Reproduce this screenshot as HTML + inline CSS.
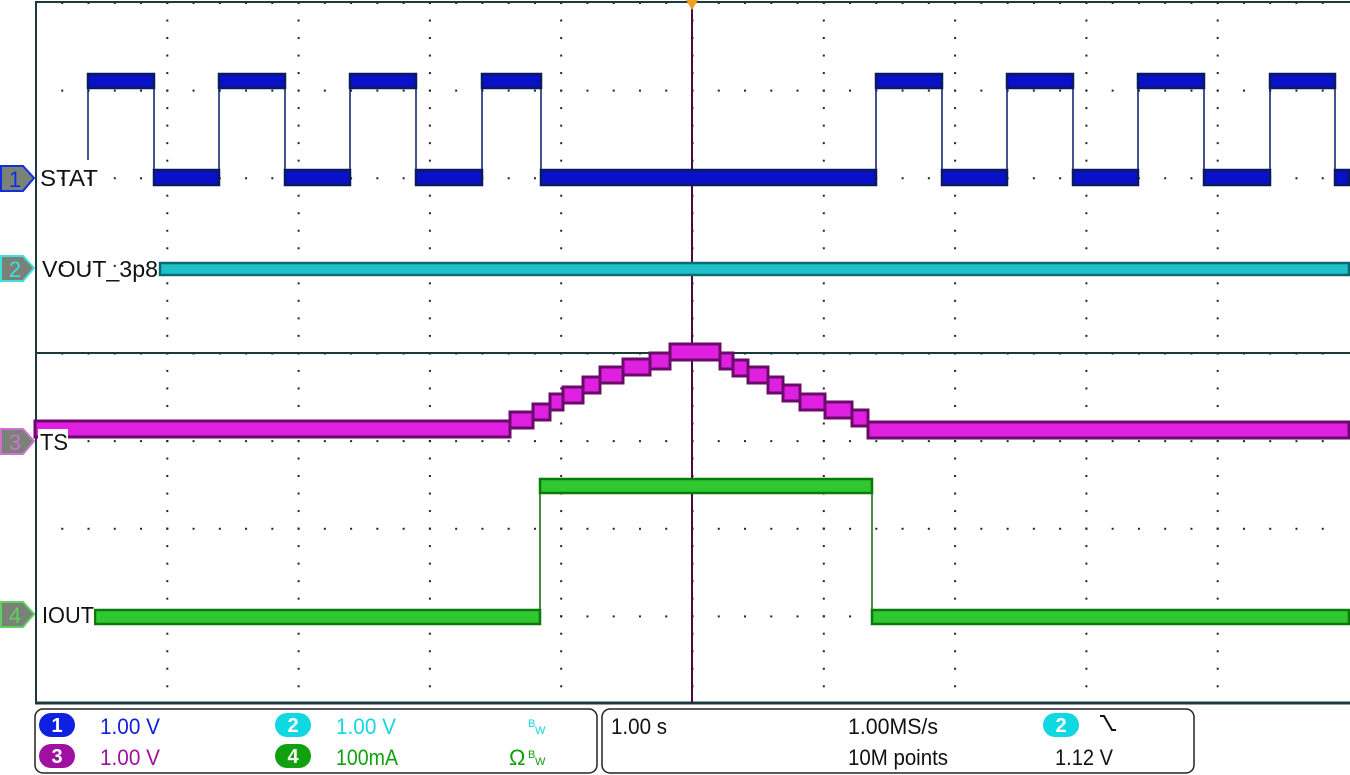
<!DOCTYPE html>
<html><head><meta charset="utf-8"><style>
body{margin:0;background:#fff;width:1350px;height:775px;overflow:hidden}
svg{display:block}
text{font-family:"Liberation Sans",sans-serif}
</style></head><body>
<svg width="1350" height="775" viewBox="0 0 1350 775">
<defs>
<pattern id="pv" x="35" y="2" width="131.3" height="17.52" patternUnits="userSpaceOnUse"><rect x="-1" y="-1" width="3" height="3" fill="#222"/></pattern>
<pattern id="ph" x="35" y="2" width="26.26" height="87.63" patternUnits="userSpaceOnUse"><rect x="-1" y="-1" width="3" height="3" fill="#222"/></pattern>
</defs>
<rect x="35" y="2" width="1313" height="701" fill="url(#pv)"/>
<rect x="35" y="2" width="1313" height="701" fill="url(#ph)"/>
<line x1="35" y1="2" x2="1350" y2="2" stroke="#1b3b3b" stroke-width="2"/>
<line x1="36" y1="2" x2="36" y2="704" stroke="#1b3b3b" stroke-width="2"/>
<line x1="35" y1="703" x2="1350" y2="703" stroke="#1b3b3b" stroke-width="3"/>
<line x1="35" y1="353" x2="1350" y2="353" stroke="#1b3b3b" stroke-width="2"/>
<line x1="692" y1="2" x2="692" y2="703" stroke="#4a0a4a" stroke-width="2"/>
<path d="M686 0 L698 0 L692 10 Z" fill="#f0a020"/>
<g stroke="#0a1a6a" stroke-width="1.5" fill="none">
<path d="M88 160V81M154 81V178M219 178V81M285 81V178M350 178V81M416 81V178M482 178V81M541 81V178M876 178V81M942 81V178M1007 178V81M1073 81V178M1138 178V81M1204 81V178M1270 178V81M1335 81V178"/>
</g>
<g fill="#0a10c8" stroke="#081a60" stroke-width="2.5">
<rect x="88" y="74" width="66" height="14"/><rect x="219" y="74" width="66" height="14"/><rect x="350" y="74" width="66" height="14"/><rect x="482" y="74" width="59" height="14"/>
<rect x="876" y="74" width="66" height="14"/><rect x="1007" y="74" width="66" height="14"/><rect x="1138" y="74" width="66" height="14"/><rect x="1270" y="74" width="65" height="14"/>
<rect x="154" y="170" width="65" height="15"/><rect x="285" y="170" width="65" height="15"/><rect x="416" y="170" width="66" height="15"/><rect x="541" y="170" width="335" height="15"/>
<rect x="942" y="170" width="65" height="15"/><rect x="1073" y="170" width="65" height="15"/><rect x="1204" y="170" width="66" height="15"/><rect x="1335" y="170" width="14" height="15"/>
</g>
<rect x="160" y="263" width="1189" height="12" fill="#20c0c8" stroke="#0a6a70" stroke-width="2.5"/>
<g fill="#e020e0" stroke="#6a0a6a" stroke-width="3">
<rect x="35" y="421" width="475" height="16"/>
<rect x="510" y="412" width="23" height="16"/><rect x="533" y="404" width="17" height="16"/><rect x="550" y="394" width="13" height="16"/><rect x="563" y="387" width="20" height="16"/><rect x="583" y="377" width="17" height="16"/><rect x="600" y="367" width="23" height="16"/><rect x="623" y="359" width="27" height="16"/><rect x="650" y="353" width="20" height="16"/><rect x="670" y="344" width="50" height="16"/><rect x="720" y="353" width="13" height="16"/><rect x="733" y="360" width="15" height="16"/><rect x="748" y="367" width="20" height="16"/><rect x="768" y="377" width="15" height="16"/><rect x="783" y="385" width="17" height="16"/><rect x="800" y="394" width="25" height="16"/><rect x="825" y="402" width="27" height="16"/><rect x="852" y="410" width="16" height="16"/>
<rect x="868" y="422" width="481" height="16"/>
</g>
<path d="M540 617V486M872 486V617" stroke="#0a6a0a" stroke-width="1.5"/>
<g fill="#30c830" stroke="#0a7a0a" stroke-width="2.5">
<rect x="95" y="610" width="445" height="14"/><rect x="540" y="479" width="332" height="14"/><rect x="872" y="610" width="477" height="14"/>
</g>
<rect x="38" y="429" width="30" height="24" fill="#fff"/>
<rect x="38" y="602" width="56" height="24" fill="#fff"/>
<g font-size="23" fill="#111">
<text x="40" y="186" textLength="58" lengthAdjust="spacingAndGlyphs">STAT</text>
<text x="42" y="277" textLength="116" lengthAdjust="spacingAndGlyphs">VOUT_3p8</text>
<text x="40" y="450" textLength="28" lengthAdjust="spacingAndGlyphs">TS</text>
<text x="42" y="623" textLength="52" lengthAdjust="spacingAndGlyphs">IOUT</text>
</g>
<g stroke-width="2" fill="#7a8278">
<path d="M1 166H23L34 178L23 191H1Z" stroke="#1030e0"/>
<path d="M1 256H23L34 268L23 281H1Z" stroke="#40e0e0"/>
<path d="M1 429H23L34 441L23 454H1Z" stroke="#d070d0"/>
<path d="M1 602H23L34 614L23 627H1Z" stroke="#60d060"/>
</g>
<g font-size="22" text-anchor="middle">
<text x="15" y="187" fill="#1030e0">1</text>
<text x="15" y="277" fill="#40e0e0">2</text>
<text x="15" y="450" fill="#d070d0">3</text>
<text x="15" y="623" fill="#60d060">4</text>
</g>
<rect x="35" y="709" width="562" height="64" rx="8" fill="none" stroke="#222" stroke-width="1.5"/>
<rect x="602" y="709" width="592" height="64" rx="8" fill="none" stroke="#222" stroke-width="1.5"/>
<rect x="39" y="713" width="36" height="24" rx="12" fill="#1020e0"/>
<rect x="39" y="744" width="36" height="24" rx="12" fill="#a010a0"/>
<rect x="275" y="713" width="36" height="24" rx="12" fill="#10d8e0"/>
<rect x="275" y="744" width="36" height="24" rx="12" fill="#10a010"/>
<rect x="1043" y="713" width="36" height="24" rx="12" fill="#10d8e0"/>
<g font-size="20" fill="#fff" text-anchor="middle" font-weight="bold">
<text x="57" y="732">1</text><text x="57" y="763">3</text><text x="293" y="732">2</text><text x="293" y="763">4</text><text x="1061" y="732">2</text>
</g>
<g font-size="22">
<text x="100" y="734" fill="#1020e0" textLength="60" lengthAdjust="spacingAndGlyphs">1.00 V</text>
<text x="100" y="765" fill="#a010a0" textLength="60" lengthAdjust="spacingAndGlyphs">1.00 V</text>
<text x="336" y="734" fill="#10d8e0" textLength="60" lengthAdjust="spacingAndGlyphs">1.00 V</text>
<text x="336" y="765" fill="#10a010" textLength="62" lengthAdjust="spacingAndGlyphs">100mA</text>
<text x="509" y="765" fill="#10a010">Ω</text>
<text x="611" y="734" fill="#111" textLength="56" lengthAdjust="spacingAndGlyphs">1.00 s</text>
<text x="848" y="734" fill="#111" textLength="90" lengthAdjust="spacingAndGlyphs">1.00MS/s</text>
<text x="848" y="765" fill="#111" textLength="100" lengthAdjust="spacingAndGlyphs">10M points</text>
<text x="1055" y="765" fill="#111" textLength="58" lengthAdjust="spacingAndGlyphs">1.12 V</text>
</g>
<g font-size="11" fill="#10d8e0"><text x="528" y="727">B</text><text x="535" y="734">W</text></g>
<g font-size="11" fill="#10a010"><text x="528" y="758">B</text><text x="535" y="765">W</text></g>
<path d="M1100 716H1104L1112 730H1116" stroke="#111" stroke-width="2" fill="none"/>
</svg>
</body></html>
